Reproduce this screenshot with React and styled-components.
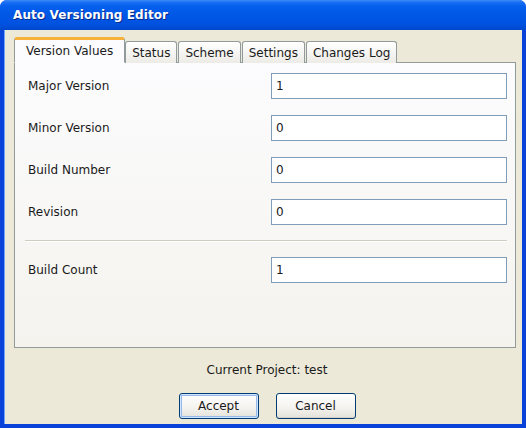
import React from "react";
import styled, { createGlobalStyle } from "styled-components";

const GlobalStyle = createGlobalStyle`
  html, body {
    margin: 0;
    padding: 0;
    background: #ffffff;
  }
  * {
    box-sizing: border-box;
  }
`;

const Window = styled.div`
  width: 526px;
  height: 428px;
  display: flex;
  flex-direction: column;
  background: #0842d8;
  border-radius: 7px 7px 0 0;
  font-family: "DejaVu Sans", "Liberation Sans", sans-serif;
  font-size: 12px;
  color: #1a1a1a;
  overflow: hidden;
`;

const TitleBar = styled.div`
  height: 30px;
  flex: none;
  display: flex;
  align-items: center;
  padding: 0 0 0 13px;
  background: linear-gradient(
    to bottom,
    #3c8cf8 0%,
    #1a6ff4 8%,
    #0560ee 20%,
    #0057e6 50%,
    #0052e0 80%,
    #0048cc 100%
  );
  color: #ffffff;
  font-weight: bold;
  font-size: 12px;
  letter-spacing: 0.1px;
  text-shadow: 1px 1px 0 #0a2a8a;
`;

const Body = styled.div`
  flex: 1;
  display: flex;
  flex-direction: column;
  margin: 0 4px 4px 4px;
  padding: 7px 6px 0 10px;
  background: #ece9d8;
  box-shadow: inset 1px 0 0 #6fa3ff;
`;

const Tabs = styled.div`
  display: flex;
  align-items: flex-end;
  height: 26px;
  position: relative;
  z-index: 1;
`;

const Tab = styled.div`
  height: ${(p) => (p.$active ? "26px" : "22px")};
  padding: 0 ${(p) => (p.$active ? "11px" : "6px")};
  display: flex;
  align-items: center;
  border: 1px solid #919b9c;
  border-bottom: ${(p) => (p.$active ? "1px solid #fcfcfe" : "none")};
  border-top: ${(p) => (p.$active ? "3px solid #f7b13a" : "1px solid #919b9c")};
  border-radius: 3px 3px 0 0;
  margin-right: ${(p) => (p.$active ? "0" : "1px")};
  background: ${(p) =>
    p.$active ? "#fcfcfe" : "linear-gradient(to bottom, #ffffff, #ecebe6)"};
  color: #1a1a1a;
  white-space: nowrap;
`;

const Panel = styled.div`
  height: 286px;
  margin-top: -1px;
  border: 1px solid #919b9c;
  background: linear-gradient(to bottom, #fcfcfe, #f4f3ee);
  padding: 10px 8px 0 12px;
`;

const FieldGrid = styled.div`
  display: grid;
  grid-template-columns: 1fr 236px;
  row-gap: 16px;
  align-items: center;
`;

const Label = styled.div`
  padding-left: 1px;
`;

const Input = styled.input`
  height: 26px;
  width: 236px;
  border: 1px solid #7f9db9;
  background: #ffffff;
  padding: 0 4px;
  font-family: "DejaVu Sans", "Liberation Sans", sans-serif;
  font-size: 12px;
  color: #1a1a1a;
  outline: none;
`;

const Separator = styled.div`
  grid-column: 1 / -1;
  height: 2px;
  margin: -1px 0 -1px -2px;
  border-top: 1px solid #d0cdc0;
  border-bottom: 1px solid #ffffff;
`;

const Footer = styled.div`
  flex: 1;
  display: flex;
  flex-direction: column;
  align-items: center;
  padding-top: 15px;
  padding-left: 4px;
`;

const ProjectLabel = styled.div`
  height: 16px;
`;

const ButtonRow = styled.div`
  display: flex;
  gap: 17px;
  margin-top: 14px;
`;

const Button = styled.button`
  width: 80px;
  height: 26px;
  border: 1px solid #003c74;
  border-radius: 3px;
  background: linear-gradient(to bottom, #ffffff 0%, #f3f2ee 60%, #e3e1d8 100%);
  font-family: "DejaVu Sans", "Liberation Sans", sans-serif;
  font-size: 12px;
  color: #1a1a1a;
  box-shadow: ${(p) =>
    p.$default
      ? "inset 0 0 0 1px #cee7ff, inset 0 0 0 2px #98b8ea"
      : "inset 0 -1px 0 #d6d0c5"};
  padding: 0;
`;

const fields = [
  ["Major Version", "1"],
  ["Minor Version", "0"],
  ["Build Number", "0"],
  ["Revision", "0"],
];

const tabs = ["Version Values", "Status", "Scheme", "Settings", "Changes Log"];

const App = () => {
  return (
    <>
      <GlobalStyle />
      <Window>
        <TitleBar>Auto Versioning Editor</TitleBar>
        <Body>
          <Tabs>
            {tabs.map((t, i) => (
              <Tab key={t} $active={i === 0}>
                {t}
              </Tab>
            ))}
          </Tabs>
          <Panel>
            <FieldGrid>
              {fields.map(([label, value]) => (
                <React.Fragment key={label}>
                  <Label>{label}</Label>
                  <Input defaultValue={value} />
                </React.Fragment>
              ))}
              <Separator />
              <Label>Build Count</Label>
              <Input defaultValue="1" />
            </FieldGrid>
          </Panel>
          <Footer>
            <ProjectLabel>Current Project: test</ProjectLabel>
            <ButtonRow>
              <Button $default>Accept</Button>
              <Button>Cancel</Button>
            </ButtonRow>
          </Footer>
        </Body>
      </Window>
    </>
  );
};

export default App;
